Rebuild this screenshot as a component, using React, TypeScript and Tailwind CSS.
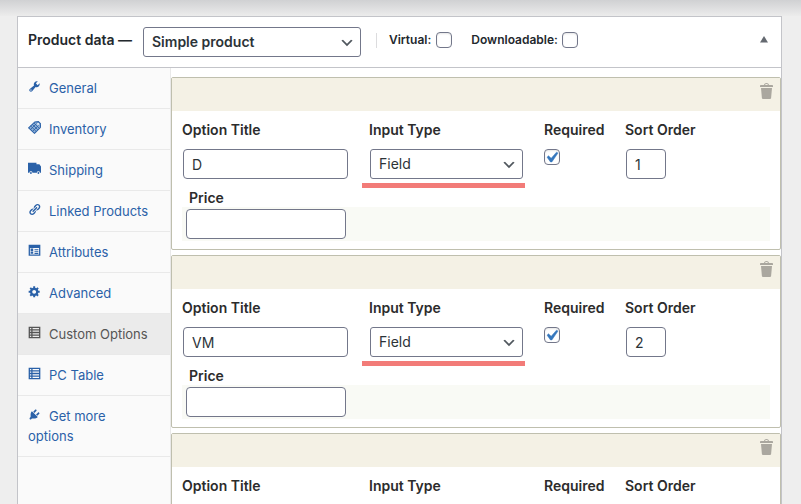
import { useState, type ReactNode } from "react";

const TABLE_PATH =
  "M1 1h18v18H1V1zm2 2v2h2V3H3zm4 0v2h10V3H7zM3 7v2h2V7H3zm4 0v2h10V7H7zm-4 4v2h2v-2H3zm4 0v2h10v-2H7zm-4 4v2h2v-2H3zm4 0v2h10v-2H7z";

const TABS: { label: string; path: string }[] = [
  {
    label: "General",
    path: "M16.68 9.77c-1.34 1.34-3.3 1.67-4.95.99l-5.41 6.52c-.99.99-2.59.99-3.58 0s-.99-2.59 0-3.57l6.52-5.42c-.68-1.65-.35-3.61.99-4.95 1.28-1.28 3.12-1.62 4.72-1.06l-2.89 2.89 2.82 2.82 2.86-2.87c.53 1.58.18 3.39-1.08 4.65zM3.81 16.21c.4.39 1.04.39 1.43 0 .4-.4.4-1.04 0-1.43-.39-.4-1.03-.4-1.43 0-.39.39-.39 1.03 0 1.43z",
  },
  { label: "Inventory", path: "" },
  {
    label: "Shipping",
    path: "M0 1h13v2.500h4.500L20 7v9.500h-1.700a2.300 2.300 0 0 0-4.600 0H6.800a2.300 2.300 0 0 0-4.600 0H0V1zM4.500 15.500a1.400 1.400 0 1 1 0 2.800 1.400 1.400 0 0 1 0-2.800zM16 15.500a1.400 1.400 0 1 1 0 2.800 1.400 1.400 0 0 1 0-2.800z",
  },
  {
    label: "Linked Products",
    path: "M17.74 2.76c1.68 1.69 1.68 4.41 0 6.1l-1.53 1.52c-1.12 1.12-2.7 1.47-4.14 1.09l2.62-2.61.76-.77.76-.76c.84-.84.84-2.2 0-3.04-.84-.85-2.2-.85-3.04 0l-.77.76-3.38 3.38c-.37-1.44-.02-3.02 1.1-4.14l1.52-1.53c1.69-1.68 4.42-1.68 6.1 0zM8.59 13.43l5.34-5.34c.42-.42.42-1.1 0-1.52-.44-.43-1.13-.39-1.53 0l-5.33 5.34c-.42.42-.42 1.1 0 1.52.44.43 1.13.39 1.52 0zm-.76 2.29l4.14-4.15c.38 1.44.03 3.02-1.09 4.14l-1.52 1.53c-1.69 1.68-4.41 1.68-6.1 0-1.68-1.68-1.68-4.42 0-6.1l1.53-1.52c1.12-1.12 2.7-1.47 4.14-1.1l-4.14 4.15c-.85.84-.85 2.2 0 3.05.84.84 2.2.84 3.04 0z",
  },
  {
    label: "Attributes",
    path: "M1 1h18v17H1V1zm2 5v10h14V6H3zm1 1h4v4H4V7zm6 1h6v1.500h-6V8zm0 3h6v1.500h-6V11zm-6 1h4v3H4v-3zm6 2h6v1.500h-6V14z",
  },
  {
    label: "Advanced",
    path: "M18 12h-2.18c-.17.7-.44 1.35-.81 1.93l1.54 1.54-2.1 2.1-1.54-1.54c-.58.36-1.23.63-1.91.79V19H8v-2.18c-.68-.16-1.33-.43-1.91-.79l-1.54 1.54-2.12-2.12 1.54-1.54c-.36-.58-.63-1.23-.79-1.91H1V9.03h2.17c.16-.7.44-1.35.8-1.94L2.43 5.55l2.1-2.1 1.54 1.54c.58-.37 1.24-.64 1.93-.81V2h3v2.18c.68.16 1.33.43 1.91.79l1.54-1.54 2.12 2.12-1.54 1.54c.36.59.64 1.24.8 1.94H18V12zm-8.5 1.5c1.66 0 3-1.34 3-3s-1.34-3-3-3-3 1.34-3 3 1.34 3 3 3z",
  },
  { label: "Custom Options", path: TABLE_PATH },
  { label: "PC Table", path: TABLE_PATH },
  {
    label: "Get more options",
    path: "M13.11 4.36L9.87 7.6 8 5.73l3.24-3.24c.35-.34 1.05-.2 1.56.32.52.51.66 1.21.31 1.55zm-8 1.77l.91-1.12 9.01 9.01-1.19.84c-.71.71-2.63 1.16-3.82 1.16H6.14L4.9 17.26c-.59.59-1.54.59-2.12 0-.59-.58-.59-1.53 0-2.12l1.24-1.24v-3.88c0-1.13.4-3.19 1.09-3.89zm7.26 3.97l3.24-3.24c.34-.35 1.04-.21 1.55.31.52.51.66 1.21.31 1.55l-3.24 3.25z",
  },
];

const OPTIONS = [
  { id: 1, title: "D" },
  { id: 2, title: "VM" },
  { id: 3, title: "" },
];

function TabIcon({ path }: { path: string }) {
  return (
    <svg viewBox="0 0 20 20" className="-mt-[2px] mr-2 mb-1 inline-block size-[13px] align-middle" fill="currentColor" fillRule="evenodd" aria-hidden="true">
      {path ? (
        <path d={path} />
      ) : (
        <>
          <path d="M1 10.500 10.500 1.500 16 1l3.500 3.500-.5 5.500-9 9z" fill="#8fb0d6" />
          <path
            d="M1 10.500 10.500 1.500 16 1l3.500 3.500-.5 5.500-9 9z"
            fill="none"
            stroke="currentColor"
            strokeWidth="1.600"
          />
          <path
            d="M4 7.500l8.500 8.500M6.500 5l8.500 8.500M9 3l8 8M4 13l9-9M7 16l9-9"
            fill="none"
            stroke="currentColor"
            strokeWidth="1.300"
          />
          <circle cx="15.500" cy="4.500" r="1.400" fill="#fafafa" />
        </>
      )}
    </svg>
  );
}

function Checkbox({ id, defaultChecked = false }: { id: string; defaultChecked?: boolean }) {
  return (
    <span className="relative block size-4 shrink-0">
      <input
        id={id}
        type="checkbox"
        defaultChecked={defaultChecked}
        className="peer block size-4 appearance-none rounded border border-[#73778a] bg-white shadow-[inset_0_1px_2px_rgba(0,0,0,0.1)]"
      />
      <svg
        viewBox="0 0 20 20"
        className="pointer-events-none invisible absolute -top-[2px] -left-[3px] size-[21px] peer-checked:visible"
        fill="#3577bd"
        stroke="#3577bd"
        strokeWidth="0.500"
        aria-hidden="true"
      >
        <path d="M14.83 4.89l1.34.94-5.81 8.38H9.02L5.78 9.67l1.34-1.25 2.57 2.4z" />
      </svg>
    </span>
  );
}

function SelectBox({ id, label, className, children }: { id: string; label?: string; className: string; children: ReactNode }) {
  return (
    <span className={`relative block ${className}`}>
      <select
        id={id}
        aria-label={label}
        className="block h-[30px] w-full appearance-none rounded-[3px] border border-[#73778a] bg-white pr-6 pl-2 text-sm text-[#2c3338]"
      >
        {children}
      </select>
      <svg viewBox="0 0 20 20" className="pointer-events-none absolute top-2 right-[6px] size-4" fill="#50575e" aria-hidden="true">
        <path d="M5 6l5 5 5-5 2 1-7 7-7-7 2-1z" />
      </svg>
    </span>
  );
}

const FIELD = "block h-[30px] rounded border border-[#73778a] bg-white px-2 text-sm text-[#2c3338]";
const LABEL = "block text-sm leading-5 font-semibold text-[#2c2c2c]";

function OptionCard({ id, title }: { id: number; title: string }) {
  return (
    <section className="rounded-[2px] border border-[#bfbfae] bg-white">
      <div className="flex h-[33px] justify-end bg-[#f4f1e5] pt-[3px] pr-[3px]">
        <button type="button" aria-label="Delete option" className="size-5 text-[#aaa79f]">
          <svg viewBox="0 0 20 20" className="size-5" fill="currentColor" fillRule="evenodd" aria-hidden="true">
            <path d="M12 4h3c.6 0 1 .4 1 1v1H3V5c0-.6.5-1 1-1h3c.2-1.1 1.3-2 2.5-2s2.3.9 2.5 2zM8 4h3c-.2-.6-.9-1-1.500-1S8.200 3.400 8 4zM4 7h11l-.9 10.100c0 .5-.5.9-1 .9H5.900c-.5 0-.9-.4-1-.9L4 7z" />
          </svg>
        </button>
      </div>
      <div className="px-[10px] pt-[9px] pb-2">
        <div className="grid grid-cols-[187px_175px_81px_1fr]">
          <div>
            <label htmlFor={`title-${id}`} className={LABEL}>
              Option Title
            </label>
            <input id={`title-${id}`} type="text" defaultValue={title} className={`${FIELD} mt-[9px] ml-px w-[165px]`} />
          </div>
          <div className="relative">
            <label htmlFor={`type-${id}`} className={LABEL}>
              Input Type
            </label>
            <SelectBox id={`type-${id}`} className="mt-[9px] ml-px w-[153px]">
              <option>Field</option>
              <option>Area</option>
            </SelectBox>
            <span className="absolute -bottom-[9px] -left-[7px] h-[5px] w-[163px] bg-[#f27b78]" />
          </div>
          <div>
            <label htmlFor={`required-${id}`} className={LABEL}>
              Required
            </label>
            <div className="mt-[9px]">
              <Checkbox id={`required-${id}`} defaultChecked />
            </div>
          </div>
          <div>
            <label htmlFor={`sort-${id}`} className={LABEL}>
              Sort Order
            </label>
            <input id={`sort-${id}`} type="text" defaultValue={id} className={`${FIELD} mt-[9px] ml-px w-10`} />
          </div>
        </div>
        <label htmlFor={`price-${id}`} className={`${LABEL} h-7 pt-[9px] pl-[7px]`}>
          Price
        </label>
        <div className="bg-[#f9faf5] px-1 py-[2px]">
          <input id={`price-${id}`} type="text" className={`${FIELD} w-40`} />
        </div>
      </div>
    </section>
  );
}

export default function App() {
  const [active, setActive] = useState("Custom Options");

  return (
    <div className="h-screen overflow-hidden bg-[#eeeeee] font-['Inter','Liberation_Sans',sans-serif]">
      <div className="h-4 bg-linear-to-b from-[#d0d1d3] to-[#ececec]" />
      <main className="mr-[19px] ml-[17px] border border-[#c3c4c9] bg-white">
        <header className="flex h-[51px] items-center border-b border-[#c3c4c9] pr-3 pl-[10px] text-[#23282d]">
          <h2 className="mb-1 w-[115px] text-sm font-semibold whitespace-nowrap">Product data —</h2>
          <SelectBox id="product-type" label="Product type" className="w-[218px] font-semibold">
            <option>Simple product</option>
            <option>Variable product</option>
          </SelectBox>
          <div className="mb-1 ml-[15px] h-[15px] w-px bg-[#dcdcde]" />
          <div className="mb-1 ml-3 flex items-center gap-[5px]">
            <label htmlFor="virtual" className="text-xs font-semibold">
              Virtual:
            </label>
            <Checkbox id="virtual" />
          </div>
          <div className="mb-1 ml-[19px] flex items-center gap-1">
            <label htmlFor="downloadable" className="text-xs font-semibold">
              Downloadable:
            </label>
            <Checkbox id="downloadable" />
          </div>
          <button type="button" aria-label="Toggle panel" className="mb-1 ml-auto text-[#646970]">
            <svg viewBox="0 0 10 10" className="size-[10px]" fill="currentColor" aria-hidden="true">
              <path d="M5 1 9 7.500H1z" />
            </svg>
          </button>
        </header>
        <div className="flex">
          <nav className="w-[153px] shrink-0 border-r border-[#e9e9e9] bg-[#fafafa]">
            <ul>
              {TABS.map((tab) => (
                <li key={tab.label} className="border-b border-[#e9e9e9]">
                  <a
                    href="#"
                    onClick={(event) => {
                      event.preventDefault();
                      setActive(tab.label);
                    }}
                    className={`block py-[10px] pr-4 pl-[10px] text-[13px] leading-5 ${
                      active === tab.label ? "bg-[#ebebeb] text-[#555555]" : "text-[#2a61a8]"
                    }`}
                  >
                    <TabIcon path={tab.path} />
                    {tab.label}
                  </a>
                </li>
              ))}
            </ul>
          </nav>
          <div className="flex min-w-0 flex-1 flex-col gap-[5px] pt-[9px]">
            {OPTIONS.map((option) => (
              <OptionCard key={option.id} id={option.id} title={option.title} />
            ))}
          </div>
        </div>
      </main>
    </div>
  );
}
